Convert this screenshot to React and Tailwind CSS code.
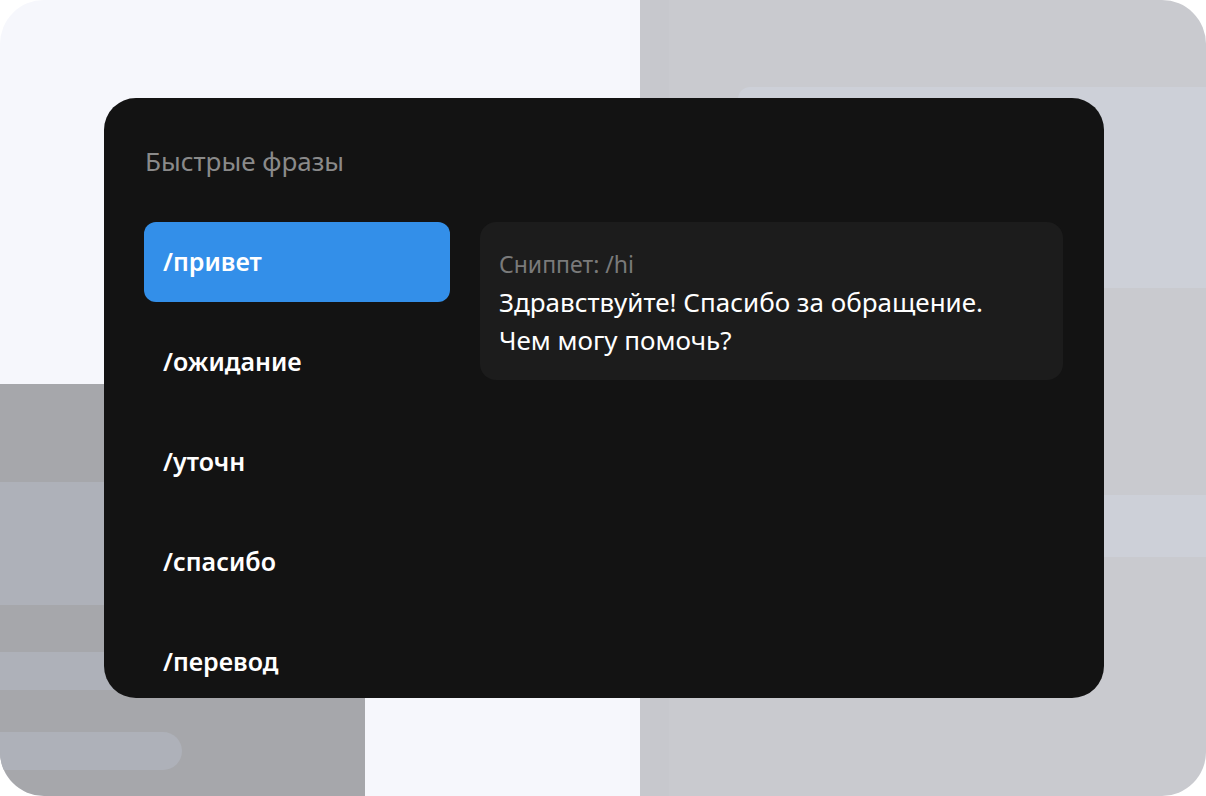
import React from 'react';

const phrases = ['/привет', '/ожидание', '/уточн', '/спасибо', '/перевод'];

export default function App() {
    return (
        <div className="w-[1206px] h-[796px] bg-white" style={{ fontFamily: '"Noto Sans", "Liberation Sans", sans-serif' }}>
            <div className="relative w-full h-full rounded-[44px] overflow-hidden flex">
                {/* фон слева */}
                <div className="w-[640px] h-full flex flex-col bg-[#f6f7fc]">
                    <div className="h-[384px]" />
                    <div className="flex-1 flex">
                        <div className="w-[365px] h-full bg-[#a6a7ab] flex flex-col pt-[98px]">
                            <div className="h-[123px] bg-[#aeb1b9]" />
                            <div className="h-[38px] mt-[47px] bg-[#aeb1b9]" />
                            <div className="h-[38px] w-[182px] mt-[42px] rounded-r-full bg-[#aeb1b9]" />
                        </div>
                        <div className="flex-1" />
                    </div>
                </div>
                {/* фон справа */}
                <div className="flex-1 h-full flex bg-[#c9cacf]">
                    <div className="w-[29px] h-full bg-[#c7c8cd]" />
                    <div className="flex-1 flex flex-col pt-[87px]">
                        <div className="h-[201px] ml-[69px] rounded-tl-xl bg-[#cdd0d8]" />
                        <div className="h-[62px] mt-[207px] ml-[69px] bg-[#cdd0d8]" />
                    </div>
                </div>

                {/* модалка */}
                <div className="absolute left-[104px] top-[98px] w-[1000px] h-[600px] rounded-[32px] bg-[#131313] overflow-hidden px-[40px] pt-[46px]">
                    <h2 className="text-[26px] leading-[34px] text-[#8a8a8a] pl-[1px]">Быстрые фразы</h2>
                    <div className="mt-[44px] grid grid-cols-[306px_1fr] gap-[30px] items-start">
                        <div className="flex flex-col gap-[20px]">
                            {phrases.map((p, i) => (
                                <div key={p}
                                    className={`h-[80px] shrink-0 rounded-xl flex items-center px-[19px] text-[25px] font-semibold text-white ${i === 0 ? 'bg-[#338fe9]' : ''}`}>
                                    {p}
                                </div>
                            ))}
                        </div>
                        <div className="mr-px rounded-2xl bg-[#1c1c1c] px-[19px] pt-[27px] pb-[21px]">
                            <div className="text-[23px] leading-[30px] text-[#7a7a7a]">Сниппет: /hi</div>
                            <p className="mt-[4px] text-[26px] leading-[38px] text-white">
                                Здравствуйте! Спасибо за обращение.<br />Чем могу помочь?
                            </p>
                        </div>
                    </div>
                </div>
            </div>
        </div>
    );
}
